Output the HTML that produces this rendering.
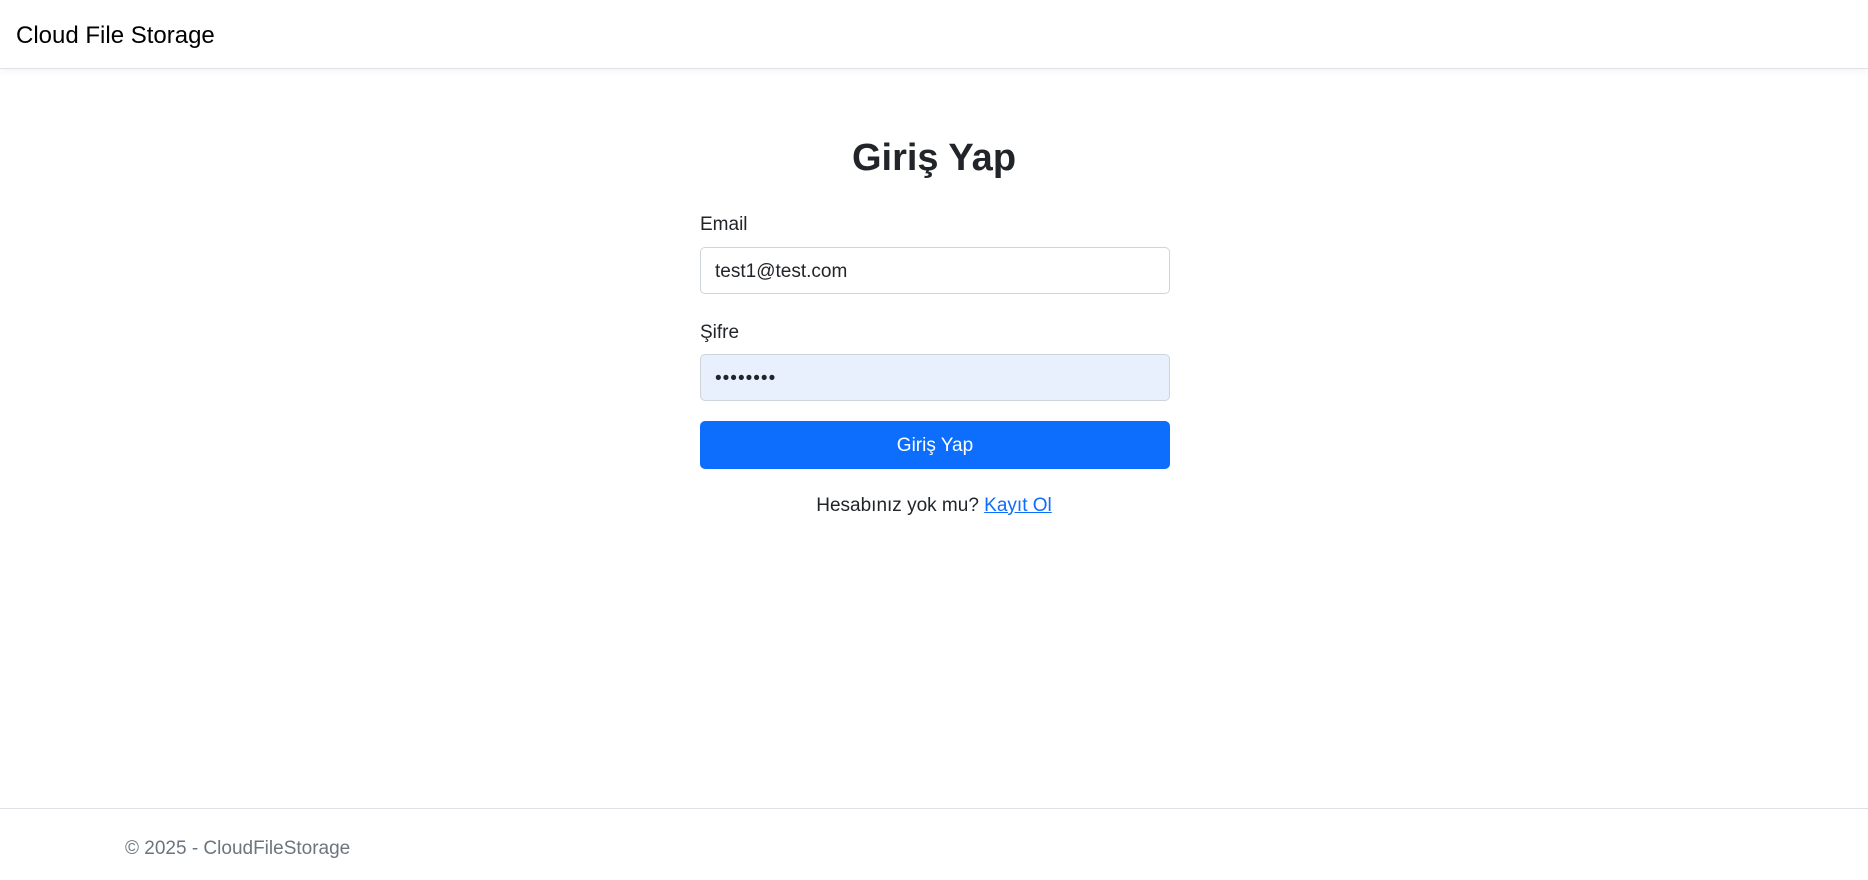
<!DOCTYPE html>
<html><head><meta charset="utf-8"><style>
*{box-sizing:border-box;margin:0;padding:0}
body{width:1868px;height:880px;background:#fff;font-family:"Liberation Sans",sans-serif;color:#212529;font-size:19px;position:relative;overflow:hidden}
.nav{position:absolute;left:0;top:0;width:100%;height:69px;border-bottom:1px solid #dee2e6;box-shadow:0 3px 6px rgba(0,0,0,.04)}
.brand{position:absolute;left:16px;top:21px;font-size:24px;line-height:29px;color:#000}
h1{position:absolute;left:0;width:1868px;text-align:center;top:135px;font-size:38px;font-weight:bold;line-height:46px}
.lbl{position:absolute;left:700px;font-size:19px;line-height:23px}
.inp{position:absolute;left:700px;width:470px;height:47px;border:1px solid #ced4da;border-radius:5px;padding:0 14px;line-height:47px;font-size:19px}
.btn{position:absolute;left:700px;top:421px;width:470px;height:48px;background:#0d6efd;border-radius:5px;color:#fff;text-align:center;line-height:50px;font-size:19px}
.reg{position:absolute;left:0;width:1868px;text-align:center;top:494px;line-height:24px}
.reg a{color:#0d6efd;text-decoration:underline}
.foot{position:absolute;left:0;top:808px;width:100%;border-top:1px solid #dee2e6}
.ft{position:absolute;left:125px;top:837px;color:#6c757d;font-size:19px;line-height:24px}
</style></head><body>
<div class="nav"><div class="brand">Cloud File Storage</div></div>
<h1>Giriş Yap</h1>
<div class="lbl" style="top:213px">Email</div>
<div class="inp" style="top:247px">test1@test.com</div>
<div class="lbl" style="top:321px">Şifre</div>
<div class="inp" style="top:354px;background:#e8f0fe;letter-spacing:1px">••••••••</div>
<div class="btn">Giriş Yap</div>
<div class="reg">Hesabınız yok mu? <a>Kayıt Ol</a></div>
<div class="foot"></div>
<div class="ft">© 2025 - CloudFileStorage</div>
</body></html>
